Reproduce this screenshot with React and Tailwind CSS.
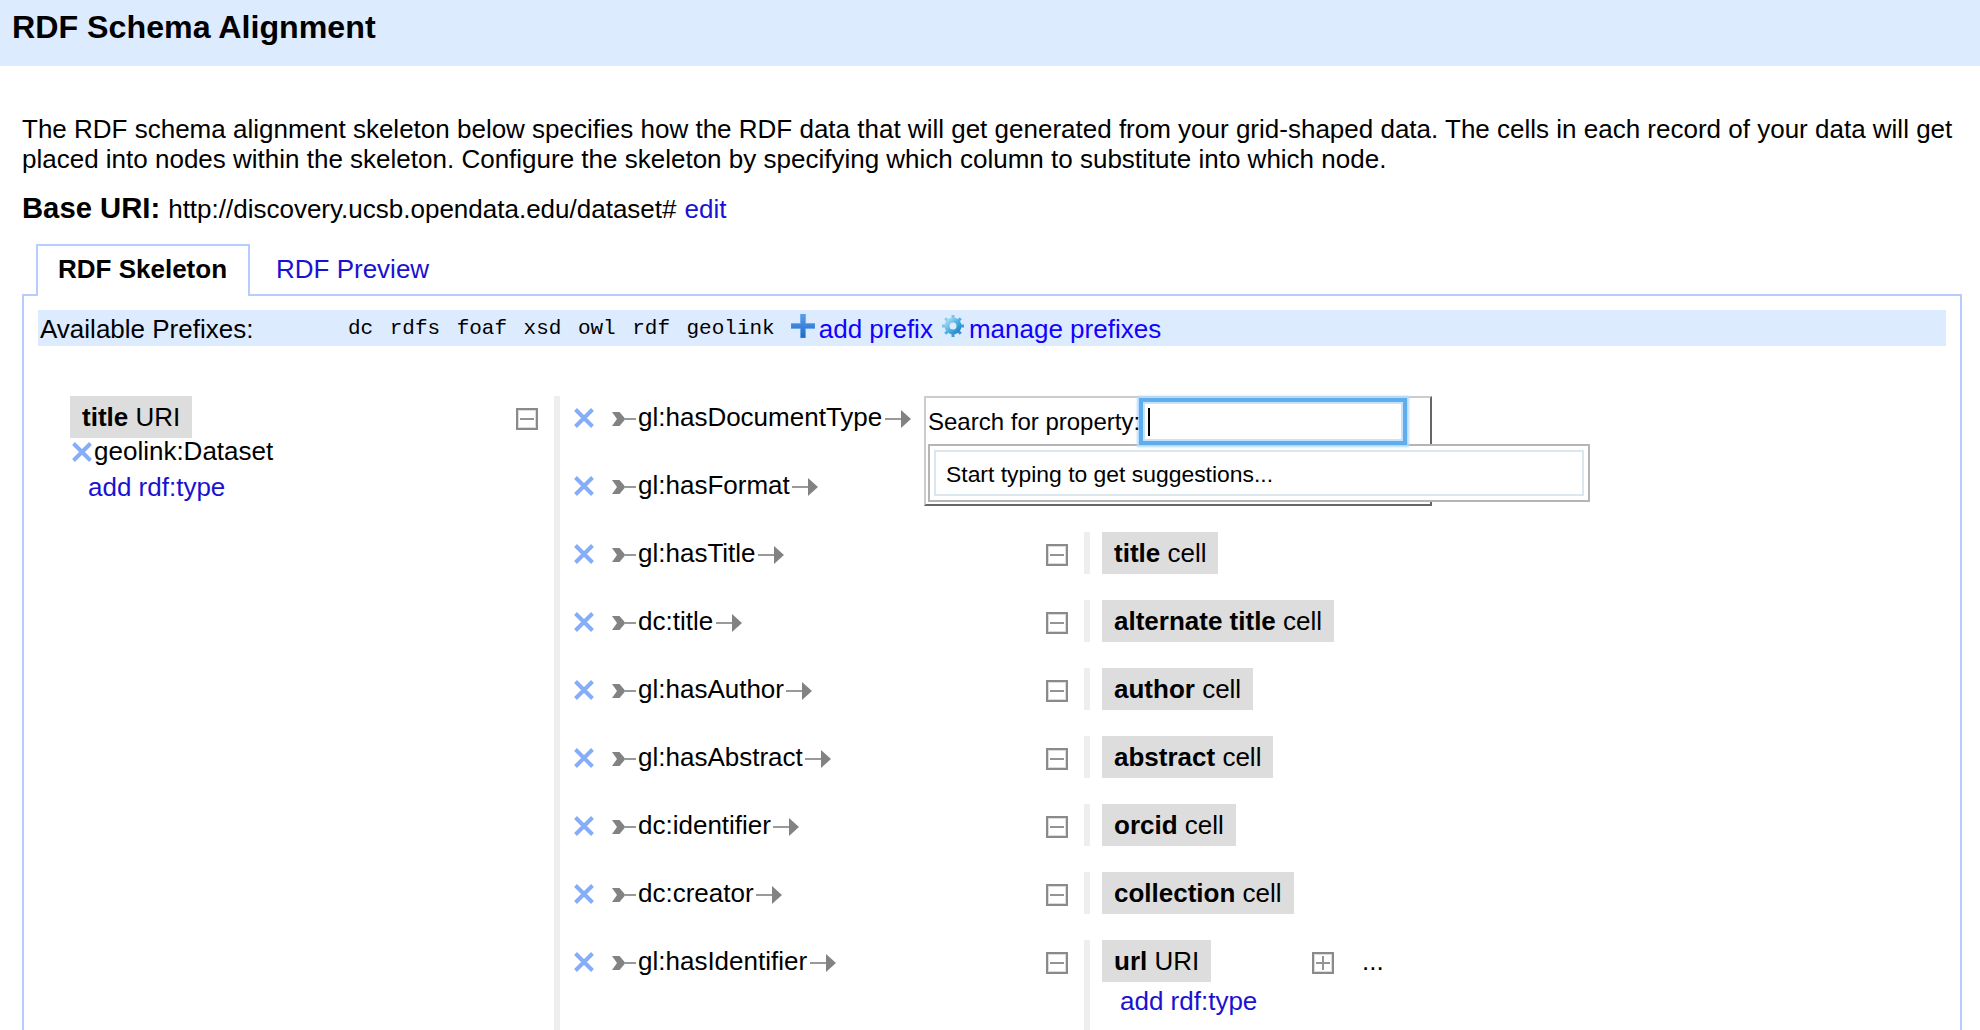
const ToggleBox = ({ plus }) => (
  <svg width="22" height="22" viewBox="0 0 22 22" className="shrink-0">
    <rect x="1" y="1" width="20" height="20" fill="#fff" stroke="#8a8a8a" strokeWidth="2" />
    <rect x="2.5" y="2.5" width="17" height="17" fill="none" stroke="#dcdcdc" strokeWidth="1" />
    <path d={plus ? "M4 11H18M11 4V18" : "M4 11H18"} stroke="#949494" strokeWidth="2" />
  </svg>
);

const Cross = () => (
  <svg width="20" height="20" viewBox="0 0 20 20" className="shrink-0">
    <path d="M1.5 1.5L18.5 18.5M18.5 1.5L1.5 18.5" stroke="#86aef8" strokeWidth="4" />
  </svg>
);

const ArrowTail = () => (
  <svg width="24" height="16" viewBox="0 0 24 16" className="shrink-0">
    <path d="M0 1H7.5L13.5 8L7.5 15H0L5 8Z" fill="#828282" />
    <path d="M12 8H24" stroke="#999" strokeWidth="2" />
  </svg>
);

const ArrowHead = () => (
  <svg width="26" height="20" viewBox="0 0 26 20" className="shrink-0">
    <path d="M0 10H17" stroke="#999" strokeWidth="2" />
    <path d="M16 1L26 10L16 19Z" fill="#828282" />
  </svg>
);

const PlusIcon = () => (
  <svg width="24" height="24" viewBox="0 0 24 24">
    <defs>
      <linearGradient id="plusFill" x1="0" y1="0" x2="0" y2="1">
        <stop offset="0" stopColor="#5aa0ea" />
        <stop offset="1" stopColor="#1f68cc" />
      </linearGradient>
    </defs>
    <path d="M9.5 0H14.5V9.5H24V14.5H14.5V24H9.5V14.5H0V9.5H9.5Z" fill="url(#plusFill)" stroke="#5b9fe6" strokeWidth="0.6" />
  </svg>
);

const GearIcon = () => (
  <svg width="24" height="24" viewBox="0 0 24 24">
    <defs>
      <linearGradient id="gearFill" x1="0" y1="0" x2="1" y2="1">
        <stop offset="0" stopColor="#a5dcf2" />
        <stop offset="0.5" stopColor="#52b2e2" />
        <stop offset="1" stopColor="#2385c6" />
      </linearGradient>
    </defs>
    <g stroke="url(#gearFill)" strokeWidth="3">
      <path d="M12.01 1L12 23M1 12.01L23 12M4.2 4.2L19.8 19.8M19.8 4.2L4.2 19.8" />
    </g>
    <circle cx="12" cy="12" r="6" fill="#dcebff" stroke="url(#gearFill)" strokeWidth="5" />
  </svg>
);

const Chip = ({ name, kind }) => (
  <div className="h-[42px] w-fit bg-[#ddd] px-3 leading-[42px] whitespace-pre">
    <b>{name}</b> {kind}
  </div>
);

const rows = [
  { p: "gl:hasDocumentType" },
  { p: "gl:hasFormat" },
  { p: "gl:hasTitle", n: "title", k: "cell" },
  { p: "dc:title", n: "alternate title", k: "cell" },
  { p: "gl:hasAuthor", n: "author", k: "cell" },
  { p: "gl:hasAbstract", n: "abstract", k: "cell" },
  { p: "dc:identifier", n: "orcid", k: "cell" },
  { p: "dc:creator", n: "collection", k: "cell" },
  { p: "gl:hasIdentifier", n: "url", k: "URI", more: true },
];

const prefixes = ["dc", "rdfs", "foaf", "xsd", "owl", "rdf", "geolink"];

const SearchPopup = () => (
  <div className="absolute top-0 left-[364px] h-[110px] w-[508px] border-2 border-t-[#ccc] border-l-[#ccc] border-r-[#666] border-b-[#666] bg-white">
    <div className="flex pl-[2px] text-[24px]">
      <span className="relative z-20 w-[215px] pt-[9px] whitespace-nowrap">Search for property:</span>
      <div className="relative z-10 mt-1 flex h-[39px] w-[260px] items-center border-2 border-[#c6e3fe] bg-white pl-[3px] shadow-[0_0_0_4px_#5eaeef,0_0_2px_6px_#b5dafc]">
        <span className="h-7 w-0.5 bg-black" />
      </div>
    </div>
    <div className="absolute top-[46px] left-[2px] h-[58px] w-[662px] border-2 border-[#b5b5b5] bg-white p-1">
      <div className="h-full border-2 border-[#dbe6ed] pt-[7px] pl-2.5 text-[22.9px]">Start typing to get suggestions...</div>
    </div>
  </div>
);

export default function App() {
  return (
    <div className="h-[1030px] w-[1980px] overflow-hidden bg-white font-['Liberation_Sans',Arial,sans-serif] text-[26px] leading-[30px] text-black">
      <header className="h-[66px] bg-[#ddebff] pl-3 pt-[9px] text-[32.2px] leading-9 font-bold">RDF Schema Alignment</header>
      <main className="px-[22px] pt-[48px]">
        <p className="whitespace-nowrap">
          The RDF schema alignment skeleton below specifies how the RDF data that will get generated from your grid-shaped data. The cells in each record of your data will get
          <br />
          placed into nodes within the skeleton. Configure the skeleton by specifying which column to substitute into which node.
        </p>
        <div className="mt-[18px] flex h-8 items-baseline gap-2">
          <b className="text-[29.25px] leading-8">Base URI:</b>
          <span>http://discovery.ucsb.opendata.edu/dataset#</span>
          <a className="text-[#1a12d0]">edit</a>
        </div>
        <div className="mt-5 flex h-[52px] pl-[14px]">
          <div className="z-10 h-[52px] w-[214px] border-2 border-b-0 border-[#b8ccff] bg-white pl-5 pt-[8px] font-bold">RDF Skeleton</div>
          <a className="pl-[26px] pt-[10px] text-[#1a12d0]">RDF Preview</a>
        </div>
        <section className="-mt-0.5 h-[760px] w-[1940px] border-2 border-[#b8ccff] px-[14px] pt-[14px]">
          <div className="flex h-9 items-start bg-[#ddebff] pt-1 pl-0.5">
            <span className="w-[308px]">Available Prefixes:</span>
            <div className="flex gap-[16.5px] font-['Liberation_Mono','Courier_New',monospace] text-[21px]">
              {prefixes.map((p) => <span key={p}>{p}</span>)}
            </div>
            <a className="ml-4 flex gap-1 text-[#1200ff]"><PlusIcon />add prefix</a>
            <a className="ml-2 flex gap-1 text-[#1200ff]"><GearIcon />manage prefixes</a>
          </div>
          <div className="flex pt-[50px] pl-8">
            <div className="w-[446px]">
              <Chip name="title" kind="URI" />
              <div className="flex h-7 items-start gap-0.5 pl-0.5"><span className="pt-1"><Cross /></span><span className="-mt-0.5">geolink:Dataset</span></div>
              <a className="ml-[18px] mt-1.5 block text-[#1a12d0]">add rdf:type</a>
            </div>
            <div className="w-[38px] pt-3"><ToggleBox /></div>
            <div className="relative h-[700px] border-l-[6px] border-[#eee] pl-[14px]">
              {rows.map((r) => (
                <div key={r.p} className="flex h-[68px]">
                  <div className="flex h-[42px] w-[472px] items-center">
                    <span className="mr-[18px] pt-0.5"><Cross /></span>
                    <span className="pt-1"><ArrowTail /></span>
                    <span className="mr-[2.5px] ml-0.5">{r.p}</span>
                    <span className="pt-1"><ArrowHead /></span>
                  </div>
                  {r.n && (
                    <>
                      <div className="w-[38px] pt-3"><ToggleBox /></div>
                      <div className={r.more ? "flex h-[120px] border-l-[6px] border-[#eee] pl-3" : "flex h-[42px] border-l-[6px] border-[#eee] pl-3"}>
                        <div className={r.more ? "w-[210px]" : ""}>
                          <Chip name={r.n} kind={r.k} />
                          {r.more && <a className="ml-[18px] mt-1 block text-[#1a12d0]">add rdf:type</a>}
                        </div>
                        {r.more && (
                          <div className="flex h-[42px] items-center gap-[28px]"><span className="pt-1"><ToggleBox plus /></span><span>...</span></div>
                        )}
                      </div>
                    </>
                  )}
                </div>
              ))}
              <SearchPopup />
            </div>
          </div>
        </section>
      </main>
    </div>
  );
}
